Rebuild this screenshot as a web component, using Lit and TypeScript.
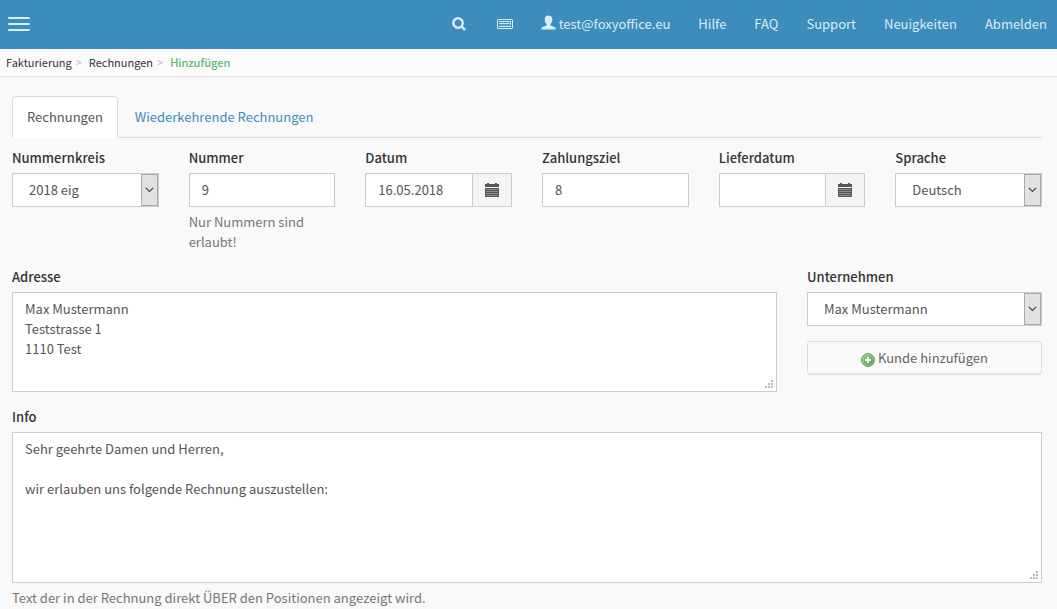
import { LitElement, html, css, svg } from "lit";
import { customElement } from "lit/decorators.js";

const searchIcon = html`<svg class="search" viewBox="0 0 14 14" width="14" height="14" aria-hidden="true">
  <circle cx="6" cy="6" r="4.7" fill="none" stroke="currentColor" stroke-width="2.4" />
  <path d="M9.2 9.2 L13 13" stroke="currentColor" stroke-width="2.6" />
</svg>`;

const keyboardIcon = html`<svg viewBox="0 0 16 10" width="16" height="10" aria-hidden="true">
  <rect x="0.5" y="0.5" width="15" height="9" rx="0.5" fill="none" stroke="currentColor" stroke-width="1" />
  <path d="M2 2.5H14M2 4.500H12.500M2 7.500H14" fill="none" stroke="currentColor" stroke-width="1" />
  <path d="M2 6H12" stroke="currentColor" stroke-width="1" opacity="0.300" />
  <path d="M13.500 2V6" stroke="currentColor" stroke-width="1" />
</svg>`;

const userIcon = html`<svg class="user" viewBox="0 0 15 15" width="15" height="15" aria-hidden="true">
  <path fill="currentColor" d="M7.5 0.5C10 0.5 11.300 2 11.300 4.400C11.300 6.500 10.500 8 9.400 9V10.200C10 11.100 13.300 11.500 14.300 12.500C14.700 13.100 14.800 13.800 14.800 14.500H0.200C0.200 13.800 0.300 13.100 0.700 12.500C1.700 11.500 5 11.100 5.600 10.200V9C4.500 8 3.700 6.500 3.700 4.400C3.700 2 5 0.500 7.500 0.500Z" />
</svg>`;

const holes: number[][] = [];
for (const y of [6, 8, 10, 12]) {
  for (const x of [1, 3, 5, 7, 9, 11]) holes.push([x + 0.5, y]);
}

const calendarIcon = html`<svg viewBox="0 0 14 14" width="14" height="14" aria-hidden="true">
  <path fill="#555" d="M0 1H2V0H4V1H10V0H12V1H14V4H0Z" />
  <path fill="#555" d="M0 5H14V13.500L13.500 14H0.500L0 13.500Z" />
  ${holes.map(([x, y]) => svg`<rect x=${x} y=${y} width="1" height="1" fill="#c9c9c9" />`)}
</svg>`;

const plusIcon = html`<svg class="plus" viewBox="0 0 14 14" width="14" height="14" aria-hidden="true">
  <defs>
    <linearGradient id="plus-fill" x1="0" y1="0" x2="1" y2="1">
      <stop offset="0" stop-color="#a5d68f" />
      <stop offset="1" stop-color="#3f9638" />
    </linearGradient>
  </defs>
  <circle cx="7" cy="7" r="6.500" fill="url(#plus-fill)" stroke="#5fa55a" stroke-width="1" />
  <circle cx="7" cy="7" r="5.300" fill="none" stroke="#b9e0aa" stroke-width="0.600" />
  <path d="M7 4V10M4 7H10" stroke="#fff" stroke-width="2" />
</svg>`;

const arrowIcon = html`<svg viewBox="0 0 9 6" width="9" height="6" aria-hidden="true">
  <path d="M0.800 0.800L4.500 4.500L8.200 0.800" fill="none" stroke="#444" stroke-width="1.200" />
</svg>`;

@customElement("app-root")
export class AppRoot extends LitElement {
  static styles = css`
    :host {
      display: block;
      min-height: 100vh;
      background: #f9f9f9;
      color: #555;
      font: 13px/20px "Noto Sans CJK SC", "Noto Sans", sans-serif;
    }
    *, *::before, *::after { box-sizing: border-box; }
    a { color: inherit; text-decoration: none; }
    button, input, select, textarea { font: inherit; color: inherit; margin: 0; }
    svg { display: block; flex: none; }

    .topbar {
      display: flex;
      align-items: center;
      justify-content: space-between;
      height: 49px;
      padding: 0 10px 2px 8px;
      background: #3c8dbc;
      color: #dceaf3;
    }
    .burger {
      display: grid;
      gap: 4px;
      width: 22px;
      padding: 0;
      border: 0;
      background: none;
    }
    .burger span { height: 2px; border-radius: 1px; background: #dceaf3; }
    .links { display: flex; align-items: center; gap: 28px; }
    .links a { display: flex; align-items: center; gap: 3px; }
    .search { margin-right: 3px; }
    .user { margin-bottom: 2px; }

    .crumbs {
      display: flex;
      gap: 4px;
      height: 28px;
      padding: 3px 6px;
      background: #fbfbfb;
      border-bottom: 1px solid #e5e5e5;
      box-shadow: 0 1px 1px #f1f1f1;
      font-size: 11px;
      color: #333;
    }
    .crumbs .sep { color: #bbb; padding-right: 3px; }
    .crumbs .current { color: #5cb874; font-weight: 500; }

    .content { padding: 19px 15px 0 12px; }
    .tabs {
      display: flex;
      gap: 2px;
      border-bottom: 1px solid #ddd;
      margin-bottom: 10px;
    }
    .tab {
      padding: 10px 14px;
      border: 1px solid transparent;
      border-bottom: 0;
      border-radius: 4px 4px 0 0;
      color: #3c8dbc;
    }
    .tab.active {
      margin-bottom: -1px;
      padding-bottom: 11px;
      border-color: #ddd;
      background: #fff;
      color: #555;
    }

    .form {
      display: grid;
      grid-template-columns: repeat(12, minmax(0, 1fr));
      gap: 15px 30px;
    }
    .field { grid-column: span 2; }
    .wide { grid-column: span 9; }
    .side { grid-column: span 3; }
    .full { grid-column: 1 / -1; }
    label { display: block; margin-bottom: 5px; color: #333; font-weight: 500; }
    .help { margin: 5px 0 0; color: #777; }

    .control {
      display: block;
      width: 100%;
      height: 34px;
      padding: 6px 12px;
      border: 1px solid #ccc;
      border-radius: 0;
      background: #fff;
      color: #555;
      outline: 0;
    }
    input.control { padding: 5px 12px 7px; }
    .select { position: relative; }
    .select .control { appearance: none; padding: 6px 32px 6px 16px; }
    .arrow {
      position: absolute;
      top: 1px;
      right: 1px;
      bottom: 1px;
      width: 17px;
      display: grid;
      place-items: center;
      border: 1px solid #aaa;
      background: #e1e1e1;
      pointer-events: none;
    }
    .group { display: flex; }
    .group .control { flex: 1; min-width: 0; }
    .addon {
      display: grid;
      place-items: center;
      width: 40px;
      height: 34px;
      margin-left: -1px;
      padding: 0;
      border: 1px solid #ccc;
      background: #f4f4f4;
    }
    textarea.control { height: 100px; resize: vertical; }
    textarea.tall { height: 151px; }
    textarea::-webkit-resizer {
      background: url("data:image/svg+xml,%3Csvg xmlns='http://www.w3.org/2000/svg' width='15' height='15'%3E%3Cpath fill='%23bbb' d='M10 4h2v2h-2zM7 7h2v2H7zM10 7h2v2h-2zM4 10h2v2H4zM7 10h2v2H7zM10 10h2v2h-2z'/%3E%3C/svg%3E") no-repeat;
    }
    .add {
      display: flex;
      align-items: center;
      justify-content: center;
      gap: 3px;
      width: 100%;
      height: 34px;
      margin-top: 15px;
      border: 1px solid #ddd;
      border-radius: 3px;
      background: #fafafa;
      box-shadow: inset 0 -1px 0 #e6e6e6;
      color: #666;
    }
    .plus { margin-top: 4px; }
  `;

  private select(id: string, label: string, value: string) {
    return html`
      <label for=${id}>${label}</label>
      <div class="select">
        <select class="control" id=${id}><option>${value}</option></select>
        <span class="arrow">${arrowIcon}</span>
      </div>`;
  }

  private input(id: string, label: string, value: string) {
    return html`
      <label for=${id}>${label}</label>
      <input class="control" id=${id} type="text" .value=${value} />`;
  }

  private date(id: string, label: string, value: string) {
    return html`
      <label for=${id}>${label}</label>
      <div class="group">
        <input class="control" id=${id} type="text" .value=${value} />
        <button class="addon" type="button" aria-label="Kalender">${calendarIcon}</button>
      </div>`;
  }

  render() {
    return html`
      <header class="topbar">
        <button class="burger" type="button" aria-label="Menü"><span></span><span></span><span></span></button>
        <nav class="links">
          <a href="#" aria-label="Suche">${searchIcon}</a>
          <a href="#" aria-label="Tastatur">${keyboardIcon}</a>
          <a href="#">${userIcon}test@foxyoffice.eu</a>
          ${["Hilfe", "FAQ", "Support", "Neuigkeiten", "Abmelden"].map((t) => html`<a href="#">${t}</a>`)}
        </nav>
      </header>
      <nav class="crumbs">
        <a href="#">Fakturierung</a><span class="sep">&gt;</span>
        <a href="#">Rechnungen</a><span class="sep">&gt;</span>
        <span class="current">Hinzufügen</span>
      </nav>
      <main class="content">
        <nav class="tabs">
          <a class="tab active" href="#">Rechnungen</a>
          <a class="tab" href="#">Wiederkehrende Rechnungen</a>
        </nav>
        <form class="form">
          <div class="field">${this.select("range", "Nummernkreis", "2018 eig")}</div>
          <div class="field">
            ${this.input("number", "Nummer", "9")}
            <p class="help">Nur Nummern sind erlaubt!</p>
          </div>
          <div class="field">${this.date("date", "Datum", "16.05.2018")}</div>
          <div class="field">${this.input("due", "Zahlungsziel", "8")}</div>
          <div class="field">${this.date("delivery", "Lieferdatum", "")}</div>
          <div class="field">${this.select("language", "Sprache", "Deutsch")}</div>
          <div class="wide">
            <label for="address">Adresse</label>
            <textarea class="control" id="address" .value=${"Max Mustermann\nTeststrasse 1\n1110 Test"}></textarea>
          </div>
          <div class="side">
            ${this.select("company", "Unternehmen", "Max Mustermann")}
            <button class="add" type="button">${plusIcon}Kunde hinzufügen</button>
          </div>
          <div class="full">
            <label for="info">Info</label>
            <textarea class="control tall" id="info" .value=${"Sehr geehrte Damen und Herren,\n\nwir erlauben uns folgende Rechnung auszustellen:"}></textarea>
            <p class="help">Text der in der Rechnung direkt ÜBER den Positionen angezeigt wird.</p>
          </div>
        </form>
      </main>
    `;
  }
}
